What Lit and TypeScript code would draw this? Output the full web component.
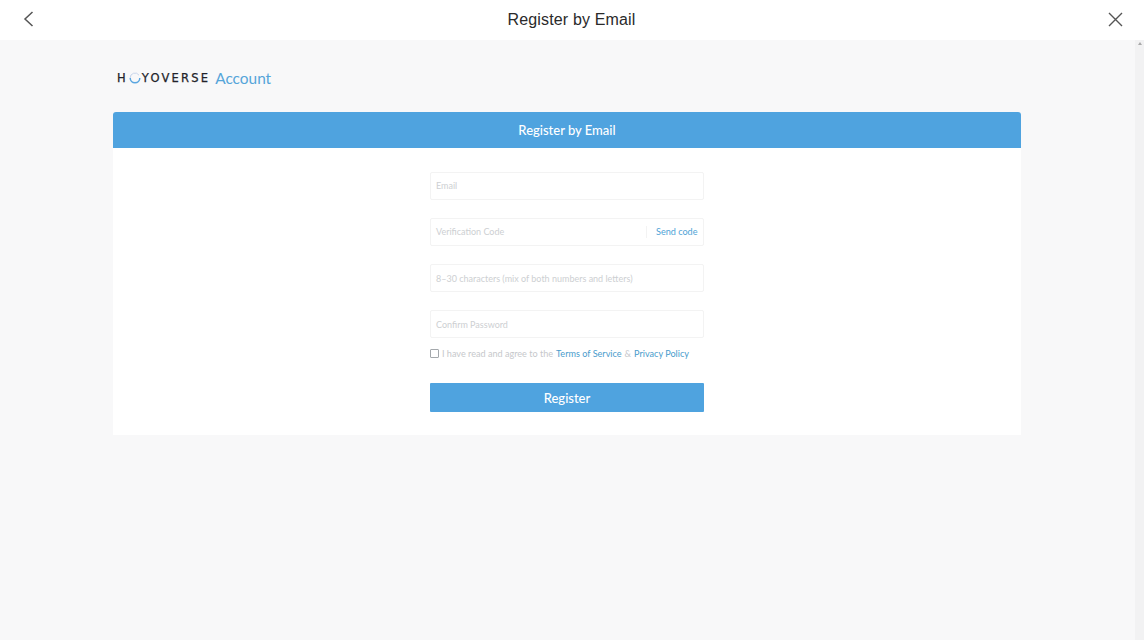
import { LitElement, html, css } from "lit";
import { customElement } from "lit/decorators.js";

@customElement("app-root")
export class AppRoot extends LitElement {
  static styles = css`
    :host { display: block; width: 1144px; height: 640px; overflow: hidden; background: #f8f8f9; font-family: Lato, "Open Sans", sans-serif; }
    .topbar { height: 40px; background: #fff; display: flex; align-items: center; justify-content: space-between; padding: 0 21px 0 21px; box-sizing: border-box; }
    .title { font-family: "Liberation Sans", Arial, sans-serif; font-size: 16px; color: #2a2a2a; flex: 1; text-align: center; letter-spacing: 0.01em; padding-right: 1px; }
    .icon { display: block; width: 16px; height: 16px; margin-top: -2px; }
    .body { display: flex; height: 600px; }
    .main { flex: 1; padding: 29px 0 0 113px; box-sizing: border-box; }
    .scroll { width: 9px; background: #f2f2f3; display: flex; justify-content: center; padding-top: 2px; box-sizing: border-box; }
    .arrow { width: 0; height: 0; border-left: 2.5px solid transparent; border-right: 2.5px solid transparent; border-bottom: 3px solid #a9a9a9; }
    .logo { display: flex; align-items: center; height: 18px; margin-bottom: 25px; padding-left: 4px; }
    .brand { display: flex; align-items: center; font-family: "DejaVu Sans", sans-serif; font-size: 11.5px; line-height: 18px; color: #22232a; letter-spacing: 2.2px; -webkit-text-stroke: 0.25px #22232a; }
    .o { width: 12px; height: 12px; margin: 0 1px 0 1px; display: block; }
    .acct { margin-left: 5px; font-size: 15.4px; color: #55a5d9; line-height: 18px; }
    .card { width: 908px; background: #fff; border-radius: 3px 3px 0 0; height: 323px; }
    .head { height: 36px; background: #4fa3df; border-radius: 3px 3px 0 0; color: #fff; font-size: 13px; font-weight: 500; display: flex; align-items: center; justify-content: center; }
    .form { width: 274px; padding-top: 24px; display: flex; flex-direction: column; margin-left: 317px; }
    .field { height: 28px; border: 1px solid #f3f3f3; border-radius: 2px; box-sizing: border-box; margin-bottom: 18px; display: flex; align-items: center; padding: 0 5px 2px 5px; font-size: 9px; color: #cdcfd2; }
    .field.low { padding-bottom: 0; }
    .field.last { margin-bottom: 8px; }
    .field .ph { flex: 1; }
    .send { color: #4fa3d6; font-size: 9.1px; border-left: 1px solid #f3f3f3; padding-left: 9px; line-height: 12px; margin-right: 0.5px; position: relative; top: 1px; }
    .agree { display: flex; align-items: center; height: 15px; font-size: 9.1px; color: #c6c8cb; margin-bottom: 22px; }
    .box { width: 7px; height: 7px; border: 1px solid #a4a8ac; border-radius: 1px; margin-right: 3px; background: #fff; flex: none; }
    .agree a { color: #4a9ccc; margin: 0 3px; }
    .agree a:last-child { margin-right: 0; }
    .btn { height: 29px; background: #4fa3df; color: #fff; font-size: 13px; font-weight: 500; display: flex; align-items: center; justify-content: center; border-radius: 1px; }
  `;

  render() {
    return html`
      <div class="topbar">
        <svg class="icon" viewBox="0 0 16 16" fill="none" stroke="#555" stroke-width="1.5"><path d="M11.5 1 L4 8 L11.5 15"/></svg>
        <div class="title">Register by Email</div>
        <svg class="icon" viewBox="0 0 16 16" fill="none" stroke="#555" stroke-width="1.4"><path d="M2 2 L15 15 M15 2 L2 15"/></svg>
      </div>
      <div class="body">
        <div class="main">
          <div class="logo">
            <div class="brand">
              <span>H</span>
              <svg class="o" viewBox="0 0 12 12" fill="none"><path d="M1.2 6 A4.8 4.8 0 0 0 10.8 6" stroke="#5aa6e0" stroke-width="1.5"/><path d="M1.2 6 A4.8 4.8 0 0 1 10 3.2" stroke="#c9d6ec" stroke-width="1"/></svg>
              <span>YOVERSE</span>
            </div>
            <span class="acct">Account</span>
          </div>
          <div class="card">
            <div class="head">Register by Email</div>
            <div class="form">
              <div class="field"><span class="ph">Email</span></div>
              <div class="field"><span class="ph">Verification Code</span><span class="send">Send code</span></div>
              <div class="field low"><span class="ph">8–30 characters (mix of both numbers and letters)</span></div>
              <div class="field low last"><span class="ph">Confirm Password</span></div>
              <div class="agree"><span class="box"></span><span>I have read and agree to the</span><a>Terms of Service</a><span>&amp;</span><a>Privacy Policy</a></div>
              <div class="btn">Register</div>
            </div>
          </div>
        </div>
        <div class="scroll"><div class="arrow"></div></div>
      </div>
    `;
  }
}
